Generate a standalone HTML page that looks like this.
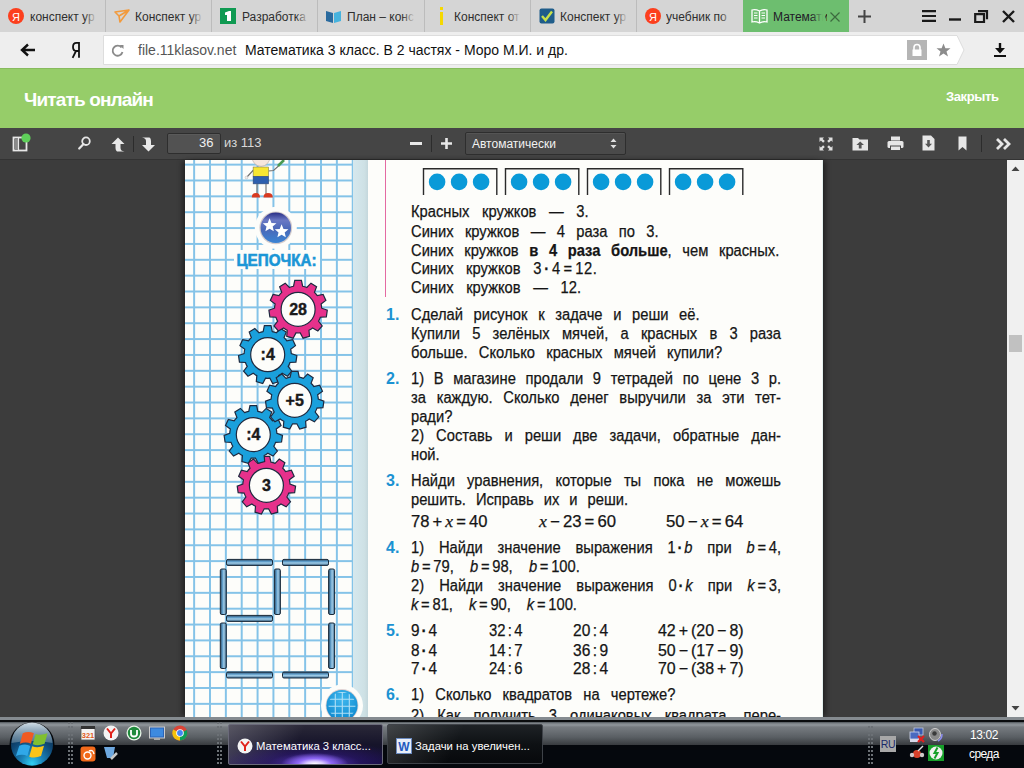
<!DOCTYPE html>
<html><head><meta charset="utf-8">
<style>
*{margin:0;padding:0;box-sizing:border-box}
html,body{width:1024px;height:768px;overflow:hidden;background:#3c3c3c;font-family:"Liberation Sans",sans-serif}
.a{position:absolute}
svg{position:absolute;overflow:visible}
.tabs{left:0;top:0;width:1024px;height:32px;background:#d5d5d5}
.sep{position:absolute;top:0;width:1px;height:32px;background:#bcbcbc}
.tt{position:absolute;top:9px;width:68px;font-size:12px;line-height:16px;color:#2e2e2e;white-space:nowrap;overflow:hidden}
.fade{position:absolute;top:6px;width:14px;height:20px;background:linear-gradient(90deg,rgba(213,213,213,0),#d5d5d5 90%)}
.addr{left:0;top:32px;width:1024px;height:36px;background:#eeeeee}
.green{left:0;top:68px;width:1024px;height:60px;background:#96cd69;border-top:1px solid #88bb5e}
.tool{left:0;top:128px;width:1024px;height:32px;background:#454545;border-bottom:1px solid #333}
.page{left:185px;top:160px;width:638px;height:557px;background:#fdfdfa;box-shadow:-4px 0 5px -1px rgba(0,0,0,0.4),4px 0 5px -1px rgba(0,0,0,0.4)}
.grid{left:185px;top:160px;width:168px;height:557px;
 background-image:linear-gradient(90deg,#84c3e8 1.55px,transparent 1.55px),linear-gradient(180deg,#84c3e8 1.55px,transparent 1.55px);
 background-size:15.87px 15.87px;background-position:8.15px 3.65px}
.band{left:353px;top:160px;width:15px;height:557px;background:linear-gradient(90deg,#d6e8ee,#cee1e5 75%,#c4d7dc)}
.sb{left:1007px;top:160px;width:17px;height:557px;background:#f0f0f0}
.task{left:0;top:717px;width:1024px;height:51px;background:#040608}
.ln{position:absolute;left:226px;font-size:16px;line-height:19px;color:#151515;-webkit-text-stroke:0.25px #151515;transform-origin:0 0;white-space:nowrap;text-align:justify;text-align-last:justify}
.ln b{font-weight:bold}
.num{position:absolute;font-size:16px;line-height:19px;color:#1b92d2;font-weight:bold}
.dot{font-weight:bold;padding:0 2px}
.eq{padding:0 3px}.mi,.pl{padding:0 3px}.co{padding:0 2.5px}
.x{font-family:"Liberation Serif",serif;font-style:italic;font-size:17px}
.v{font-style:italic}
.gt{position:absolute;font-size:14px;font-weight:bold;color:#1a1a1a;text-align:center;width:40px;line-height:16px}
</style></head>
<body>
<!-- TAB BAR -->
<div class="a tabs">
  <div class="sep" style="left:105px"></div>
  <div class="sep" style="left:211px"></div>
  <div class="sep" style="left:317px"></div>
  <div class="sep" style="left:424px"></div>
  <div class="sep" style="left:530px"></div>
  <div class="sep" style="left:636px"></div>
  <!-- tab 0 yandex -->
  <svg style="left:8px;top:8px" width="16" height="16"><circle cx="8" cy="8" r="8" fill="#fc3f1d"/><text x="8" y="12.5" font-size="11" font-family="Liberation Sans" fill="#fff" text-anchor="middle">Я</text></svg>
  <div class="tt" style="left:30px">конспект ур</div><div class="fade" style="left:84px"></div>
  <!-- tab 1 plane -->
  <svg style="left:114px;top:9px" width="16" height="14"><path d="M1 3 L15 1 L6 13 L5 7 Z M5 7 L15 1" fill="none" stroke="#f29a3c" stroke-width="1.6" stroke-linejoin="round"/></svg>
  <div class="tt" style="left:135px">Конспект ур</div><div class="fade" style="left:190px"></div>
  <!-- tab 2 green 1 -->
  <div class="a" style="left:220px;top:8px;width:16px;height:16px;background:#109a52"></div>
  <svg style="left:220px;top:8px" width="16" height="16"><path d="M5 4.5 L9 3 L11 3 L11 13 L7 13 L7 7 L5 7 Z" fill="#fff"/></svg>
  <div class="tt" style="left:242px">Разработка</div><div class="fade" style="left:296px"></div>
  <!-- tab 3 book -->
  <svg style="left:325px;top:9px" width="17" height="15"><path d="M1 2 L8 4 L8 14 L1 12 Z" fill="#2a6a9e"/><path d="M9 4 L16 2 L16 12 L9 14 Z" fill="#46b3de"/></svg>
  <div class="tt" style="left:347px">План – конс</div><div class="fade" style="left:402px"></div>
  <!-- tab 4 yellow i -->
  <svg style="left:438px;top:7px" width="8" height="18"><rect x="2" y="0" width="3" height="3" fill="#f5d800"/><rect x="2" y="5" width="3" height="13" fill="#f5d800"/></svg>
  <div class="tt" style="left:454px">Конспект от</div><div class="fade" style="left:508px"></div>
  <!-- tab 5 check -->
  <svg style="left:539px;top:8px" width="16" height="16"><rect x="0.5" y="0.5" width="15" height="15" rx="2" fill="#1f5d8a"/><path d="M3 8 L6.5 12 L13 3.5" fill="none" stroke="#c8e04a" stroke-width="2.4"/></svg>
  <div class="tt" style="left:560px">Конспект ур</div><div class="fade" style="left:615px"></div>
  <!-- tab 6 yandex -->
  <svg style="left:645px;top:8px" width="16" height="16"><circle cx="8" cy="8" r="8" fill="#fc3f1d"/><text x="8" y="12.5" font-size="11" font-family="Liberation Sans" fill="#fff" text-anchor="middle">Я</text></svg>
  <div class="tt" style="left:666px">учебник по</div><div class="fade" style="left:720px"></div>
  <!-- active tab -->
  <div class="a" style="left:743px;top:0;width:106px;height:32px;background:#6dbe6f"></div>
  <svg style="left:751px;top:8px" width="17" height="16"><path d="M1 2 Q4.5 1 8.5 3 Q12.5 1 16 2 L16 14 Q12.5 13 8.5 15 Q4.5 13 1 14 Z M8.5 3 L8.5 15" fill="none" stroke="#fff" stroke-width="1.3"/><path d="M3 5h3.5M3 7.5h3.5M3 10h3.5M10.5 5h3.5M10.5 7.5h3.5M10.5 10h3.5" stroke="#fff" stroke-width="1"/></svg>
  <div class="tt" style="left:773px;width:54px;color:#221a28">Математика</div>
  <div class="a" style="left:811px;top:6px;width:14px;height:20px;background:linear-gradient(90deg,rgba(109,190,111,0),#6dbe6f 90%)"></div>
  <svg style="left:830px;top:12px" width="10" height="10"><path d="M0.5 0.5 L9.5 9.5 M9.5 0.5 L0.5 9.5" stroke="#3d6a3f" stroke-width="1.2"/></svg>
  <!-- plus -->
  <svg style="left:858px;top:10px" width="13" height="13"><path d="M6.5 0 V13 M0 6.5 H13" stroke="#444" stroke-width="2"/></svg>
  <!-- hamburger -->
  <svg style="left:922px;top:10px" width="14" height="12"><path d="M0 1.2H14M0 6H14M0 10.8H14" stroke="#1a1a1a" stroke-width="2.2"/></svg>
  <svg style="left:949px;top:18px" width="12" height="3"><path d="M0 1.5H12" stroke="#1a1a1a" stroke-width="2.4"/></svg>
  <svg style="left:974px;top:10px" width="14" height="13"><path d="M4 1.2H13V9.2M1.2 4.2H10V12H1.2Z" fill="none" stroke="#1a1a1a" stroke-width="2.2"/></svg>
  <svg style="left:1002px;top:10px" width="13" height="13"><path d="M1 1L12 12M12 1L1 12" stroke="#1a1a1a" stroke-width="2.4"/></svg>
</div>
<!-- ADDRESS -->
<div class="a addr"></div>
<svg style="left:20px;top:43px" width="16" height="14"><path d="M15 7H3 M8 1.5 L2 7 L8 12.5" fill="none" stroke="#111" stroke-width="2.4"/></svg>
<svg style="left:0;top:0" width="100" height="70"><path d="M79 57.8 V42.8 H76.5 Q73 42.8 73 47 Q73 51 76.5 51 H79 M76 51 L72.6 57.8" fill="none" stroke="#111" stroke-width="1.8"/></svg>
<svg style="left:0;top:0" width="1024" height="70"><path d="M103.5 35.5 H957 L964 50 L957 64.5 H103.5 Z" fill="#fff" stroke="#dddddd" stroke-width="1"/></svg>
<svg style="left:111px;top:44px" width="14" height="13"><path d="M10.5 3.5 A5 5 0 1 0 11.5 8" fill="none" stroke="#8a8a8a" stroke-width="1.8"/><path d="M8.5 1 L12.5 1 L12.5 5 Z" fill="#8a8a8a"/></svg>
<div class="a" style="left:138px;top:42px;font-size:14px;line-height:16px;color:#555;white-space:nowrap">file.11klasov.net</div>
<div class="a" style="left:245px;top:42px;font-size:14px;line-height:16px;color:#111;white-space:nowrap">Математика 3 класс. В 2 частях - Моро М.И. и др.</div>
<div class="a" style="left:907px;top:40px;width:20px;height:20px;background:#b5b5b5"></div>
<svg style="left:907px;top:40px" width="20" height="20"><path d="M7 10 V7.5 A3 3 0 0 1 13 7.5 V10" fill="none" stroke="#fff" stroke-width="1.6"/><rect x="5.5" y="9.5" width="9" height="6.5" fill="#fff"/></svg>
<svg style="left:936px;top:43px" width="15" height="14"><path d="M7.5 0.5 L9.4 5.2 L14.5 5.3 L10.5 8.5 L12 13.5 L7.5 10.6 L3 13.5 L4.5 8.5 L0.5 5.3 L5.6 5.2 Z" fill="#8c8c8c"/></svg>
<svg style="left:993px;top:43px" width="14" height="14"><path d="M7 0 V9" stroke="#111" stroke-width="2.4"/><path d="M2 5 L7 10.5 L12 5 Z" fill="#111"/><path d="M1 13H13" stroke="#111" stroke-width="2"/></svg>
<!-- GREEN HEADER -->
<div class="a green"></div>
<div class="a" style="left:24px;top:88.5px;font-size:19px;line-height:22px;font-weight:bold;color:#fff;letter-spacing:-0.85px;white-space:nowrap">Читать онлайн</div>
<div class="a" style="left:946px;top:89px;font-size:13px;line-height:16px;font-weight:bold;color:#fff;letter-spacing:-0.4px;white-space:nowrap">Закрыть</div>
<!-- TOOLBAR -->
<div class="a tool"></div>
<svg style="left:12px;top:136px" width="16" height="16"><rect x="1.5" y="1.5" width="13" height="13" fill="none" stroke="#e8e8e8" stroke-width="1.8"/><rect x="3" y="3" width="3" height="10" fill="#8a8a8a"/><path d="M6.5 2 V14" stroke="#e8e8e8" stroke-width="1.2"/></svg>
<svg style="left:21px;top:133px" width="10" height="10"><circle cx="5" cy="5" r="4.6" fill="#5fd05a"/></svg>
<svg style="left:78px;top:136px" width="13" height="14"><circle cx="8" cy="5.2" r="3.8" fill="none" stroke="#e6e6e6" stroke-width="1.8"/><path d="M5.5 8 L1.2 12.5" stroke="#e6e6e6" stroke-width="2.2" stroke-linecap="round"/></svg>
<svg style="left:111px;top:137px" width="14" height="15"><path d="M7 0.5 L13.5 7 H9.5 V11 Q9.5 14 13.5 14.5 H6 Q4.5 14 4.5 11 V7 H0.5 Z" fill="#e8e8e8"/></svg>
<div class="a" style="left:133px;top:136px;width:1px;height:16px;background:#2c2c2c"></div>
<svg style="left:141px;top:137px" width="15" height="15"><path d="M7.5 14.5 L1 8 H5 V4 Q5 1 1 0.5 H8.5 Q10 1 10 4 V8 H14 Z" fill="#e8e8e8"/></svg>
<div class="a" style="left:167px;top:133px;width:54px;height:21px;background:#525252;border:1px solid #2e2e2e;border-radius:2px;box-shadow:inset 0 1px 0 rgba(255,255,255,0.05)"></div>
<div class="a" style="left:199px;top:135px;font-size:13px;line-height:16px;color:#f0f0f0">36</div>
<div class="a" style="left:224px;top:135px;font-size:13px;line-height:16px;color:#d8d8d8;white-space:nowrap">из 113</div>
<div class="a" style="left:410px;top:142px;width:12px;height:3px;background:#e8e8e8"></div>
<div class="a" style="left:431px;top:135px;width:1px;height:17px;background:#2c2c2c"></div>
<svg style="left:441px;top:138px" width="11" height="11"><path d="M5.5 0V11M0 5.5H11" stroke="#e8e8e8" stroke-width="2.6"/></svg>
<div class="a" style="left:465px;top:132px;width:161px;height:23px;background:#4a4a4a;border:1px solid #2e2e2e;border-radius:2px;box-shadow:inset 0 1px 0 rgba(255,255,255,0.06)"></div>
<div class="a" style="left:472px;top:137px;font-size:12px;line-height:14px;color:#f2f2f2;white-space:nowrap">Автоматически</div>
<svg style="left:610px;top:138px" width="7" height="11"><path d="M3.5 0.5 L6.5 4 H0.5 Z M3.5 10.5 L6.5 7 H0.5 Z" fill="#e0e0e0"/></svg>
<!-- right toolbar icons -->
<svg style="left:819px;top:137px" width="14" height="14"><path d="M0.5 0.5H5L3.6 1.9L5.8 4.1L4.1 5.8L1.9 3.6L0.5 5Z M13.5 0.5H9L10.4 1.9L8.2 4.1L9.9 5.8L12.1 3.6L13.5 5Z M0.5 13.5H5L3.6 12.1L5.8 9.9L4.1 8.2L1.9 10.4L0.5 9Z M13.5 13.5H9L10.4 12.1L8.2 9.9L9.9 8.2L12.1 10.4L13.5 9Z" fill="#e0e0e0"/></svg>
<svg style="left:852px;top:136px" width="17" height="15"><path d="M0.5 2 H6 L7.5 3.5 H16 V14.5 H0.5 Z" fill="#e6e6e6"/><path d="M8.2 5.5 L12 9 H9.6 V12.5 H6.8 V9 H4.4 Z" fill="#555"/></svg>
<svg style="left:887px;top:136px" width="17" height="15"><rect x="4" y="0.5" width="9" height="4" fill="#e6e6e6"/><rect x="0.5" y="5" width="16" height="7" rx="1.5" fill="#e6e6e6"/><rect x="3.5" y="10" width="10" height="4.5" fill="#e6e6e6" stroke="#474747" stroke-width="1"/></svg>
<svg style="left:922px;top:135px" width="13" height="16"><path d="M0.5 0.5 H9 L12.5 4 V15.5 H0.5 Z" fill="#e6e6e6"/><path d="M6.5 12.5 L10 8.8 H7.8 V5 H5.2 V8.8 H3 Z" fill="#555"/></svg>
<svg style="left:958px;top:136px" width="9" height="15"><path d="M0.5 0.5 H8.5 V14.5 L4.5 11 L0.5 14.5 Z" fill="#e6e6e6"/></svg>
<div class="a" style="left:981px;top:135px;width:1px;height:17px;background:#2c2c2c"></div>
<svg style="left:996px;top:138px" width="15" height="12"><path d="M1 1 L6 6 L1 11 M8 1 L13 6 L8 11" fill="none" stroke="#e6e6e6" stroke-width="2.8"/></svg>
<!-- PAGE -->
<div class="a page"></div>
<div class="a grid"></div>
<div class="a band"></div>
<div class="a" style="left:822px;top:160px;width:1px;height:557px;background:#e4f0ee"></div>
<div class="a" style="left:384.7px;top:160px;width:1.6px;height:137px;background:#e46aa2"></div>
<div class="a" style="left:185px;top:160px;width:638px;height:557px;overflow:hidden"><svg style="left:-185px;top:-160px" width="1024" height="717"><defs><linearGradient id="bdg" x1="0" y1="0" x2="0" y2="1"><stop offset="0" stop-color="#2a2f86"/><stop offset="0.25" stop-color="#6a78c4"/><stop offset="0.55" stop-color="#4a68b8"/><stop offset="1" stop-color="#3a84d4"/></linearGradient><linearGradient id="stkh" x1="0" y1="0" x2="0" y2="1"><stop offset="0" stop-color="#2c4a66"/><stop offset="0.35" stop-color="#5e9cc8"/><stop offset="0.6" stop-color="#9fcbe6"/><stop offset="1" stop-color="#3e6a8e"/></linearGradient><linearGradient id="stkv" x1="0" y1="0" x2="1" y2="0"><stop offset="0" stop-color="#2c4a66"/><stop offset="0.35" stop-color="#5e9cc8"/><stop offset="0.6" stop-color="#9fcbe6"/><stop offset="1" stop-color="#3e6a8e"/></linearGradient><radialGradient id="glb" cx="0.5" cy="0.3" r="0.75"><stop offset="0" stop-color="#40b8ee"/><stop offset="0.8" stop-color="#1590d4"/><stop offset="1" stop-color="#0a6ab0"/></radialGradient><clipPath id="gclip"><circle cx="342" cy="705.5" r="13.5"/></clipPath></defs><path d="M423.5 195 V168.7 H496.8 V195" fill="none" stroke="#2a2a2a" stroke-width="1.4"/><circle cx="437.1" cy="181.9" r="8.3" fill="#0a9ad8"/><circle cx="459.1" cy="181.9" r="8.3" fill="#0a9ad8"/><circle cx="481.1" cy="181.9" r="8.3" fill="#0a9ad8"/><path d="M505.5 195 V168.7 H578.8 V195" fill="none" stroke="#2a2a2a" stroke-width="1.4"/><circle cx="519.1" cy="181.9" r="8.3" fill="#0a9ad8"/><circle cx="541.1" cy="181.9" r="8.3" fill="#0a9ad8"/><circle cx="563.1" cy="181.9" r="8.3" fill="#0a9ad8"/><path d="M587.5 195 V168.7 H660.8 V195" fill="none" stroke="#2a2a2a" stroke-width="1.4"/><circle cx="601.1" cy="181.9" r="8.3" fill="#0a9ad8"/><circle cx="623.1" cy="181.9" r="8.3" fill="#0a9ad8"/><circle cx="645.1" cy="181.9" r="8.3" fill="#0a9ad8"/><path d="M669.5 195 V168.7 H742.8 V195" fill="none" stroke="#2a2a2a" stroke-width="1.4"/><circle cx="683.1" cy="181.9" r="8.3" fill="#0a9ad8"/><circle cx="705.1" cy="181.9" r="8.3" fill="#0a9ad8"/><circle cx="727.1" cy="181.9" r="8.3" fill="#0a9ad8"/><circle cx="261" cy="157.5" r="8.8" fill="#f6e6dc" stroke="#b8a8a0" stroke-width="0.6"/><path d="M253.5 170 L246.5 177.5 M268.5 171 L273.5 170.5 L278.5 166" stroke="#707070" stroke-width="1.1" fill="none"/><circle cx="246.5" cy="177.5" r="1.4" fill="#eee" stroke="#aaa" stroke-width="0.4"/><path d="M278 166 L284 160" stroke="#4a9a52" stroke-width="2.6"/><rect x="253.1" y="167" width="15.6" height="9.3" fill="#f8e632" stroke="#6a6a50" stroke-width="0.5"/><rect x="253.1" y="176.3" width="15.6" height="7.6" fill="#2d5fae" stroke="#3a4a6a" stroke-width="0.5"/><path d="M257 184 V194 M266 184 V194" stroke="#7a7a7a" stroke-width="1.2"/><path d="M251.8 197.4 Q251.8 193 256 193 Q260 193 260 197.4 Z M263.5 197.4 Q263.5 193 268 193 Q272.8 193 272.8 197.4 Z" fill="#d83a20"/><circle cx="275.8" cy="227.8" r="21" fill="#fdfdfa"/><circle cx="275.8" cy="227.8" r="16.4" fill="#d4cccc"/><circle cx="275.8" cy="227.8" r="15.2" fill="url(#bdg)"/><path d="M269.60,218.30 L271.50,222.88 L276.45,223.28 L272.68,226.50 L273.83,231.32 L269.60,228.74 L265.37,231.32 L266.52,226.50 L262.75,223.28 L267.70,222.88 Z" fill="#fff"/><path d="M281.60,224.30 L283.50,228.88 L288.45,229.28 L284.68,232.50 L285.83,237.32 L281.60,234.74 L277.37,237.32 L278.52,232.50 L274.75,229.28 L279.70,228.88 Z" fill="#fff"/><rect x="234" y="250" width="86" height="19" fill="#fdfdfa"/><text x="236.5" y="265.7" font-family="Liberation Sans" font-weight="bold" font-size="16" fill="#1b96d6" stroke="#1b96d6" stroke-width="0.6" textLength="80" lengthAdjust="spacingAndGlyphs">ЦЕПОЧКА:</text><path d="M263.15 331.54 L264.37 325.69 L271.03 325.69 L272.25 331.54 A23.6 23.6 0 0 1 276.39 332.76 L280.58 328.50 L286.18 332.10 L284.05 337.68 A23.6 23.6 0 0 1 286.87 340.94 L292.71 339.62 L295.47 345.68 L290.66 349.22 A23.6 23.6 0 0 1 291.27 353.49 L296.89 355.53 L295.94 362.12 L289.97 362.50 A23.6 23.6 0 0 1 288.18 366.42 L291.80 371.18 L287.44 376.21 L282.22 373.31 A23.6 23.6 0 0 1 278.59 375.64 L279.07 381.60 L272.68 383.47 L269.85 378.20 A23.6 23.6 0 0 1 265.55 378.20 L262.72 383.47 L256.33 381.60 L256.81 375.64 A23.6 23.6 0 0 1 253.18 373.31 L247.96 376.21 L243.60 371.18 L247.22 366.42 A23.6 23.6 0 0 1 245.43 362.50 L239.46 362.12 L238.51 355.53 L244.13 353.49 A23.6 23.6 0 0 1 244.74 349.22 L239.93 345.68 L242.69 339.62 L248.53 340.94 A23.6 23.6 0 0 1 251.35 337.68 L249.22 332.10 L254.82 328.50 L259.01 332.76 A23.6 23.6 0 0 1 263.15 331.54 Z" fill="#1aa0dc" stroke="#1e2a40" stroke-width="1.2"/><circle cx="267.7" cy="354.7" r="17" fill="#fdfdfa" stroke="#1e2a40" stroke-width="1.2"/><text x="267.7" y="359.9" font-family="Liberation Sans" font-weight="bold" font-size="16" fill="#1a1a1a" stroke="#1a1a1a" stroke-width="0.4" text-anchor="middle">:4</text><path d="M261.85 462.14 L263.07 456.29 L269.73 456.29 L270.95 462.14 A23.6 23.6 0 0 1 275.09 463.36 L279.28 459.10 L284.88 462.70 L282.75 468.28 A23.6 23.6 0 0 1 285.57 471.54 L291.41 470.22 L294.17 476.28 L289.36 479.82 A23.6 23.6 0 0 1 289.97 484.09 L295.59 486.13 L294.64 492.72 L288.67 493.10 A23.6 23.6 0 0 1 286.88 497.02 L290.50 501.78 L286.14 506.81 L280.92 503.91 A23.6 23.6 0 0 1 277.29 506.24 L277.77 512.20 L271.38 514.07 L268.55 508.80 A23.6 23.6 0 0 1 264.25 508.80 L261.42 514.07 L255.03 512.20 L255.51 506.24 A23.6 23.6 0 0 1 251.88 503.91 L246.66 506.81 L242.30 501.78 L245.92 497.02 A23.6 23.6 0 0 1 244.13 493.10 L238.16 492.72 L237.21 486.13 L242.83 484.09 A23.6 23.6 0 0 1 243.44 479.82 L238.63 476.28 L241.39 470.22 L247.23 471.54 A23.6 23.6 0 0 1 250.05 468.28 L247.92 462.70 L253.52 459.10 L257.71 463.36 A23.6 23.6 0 0 1 261.85 462.14 Z" fill="#e6318b" stroke="#1e2a40" stroke-width="1.2"/><circle cx="266.4" cy="485.3" r="17" fill="#fdfdfa" stroke="#1e2a40" stroke-width="1.2"/><text x="266.4" y="490.5" font-family="Liberation Sans" font-weight="bold" font-size="16" fill="#1a1a1a" stroke="#1a1a1a" stroke-width="0.4" text-anchor="middle">3</text><path d="M248.75 411.44 L249.97 405.59 L256.63 405.59 L257.85 411.44 A23.6 23.6 0 0 1 261.99 412.66 L266.18 408.40 L271.78 412.00 L269.65 417.58 A23.6 23.6 0 0 1 272.47 420.84 L278.31 419.52 L281.07 425.58 L276.26 429.12 A23.6 23.6 0 0 1 276.87 433.39 L282.49 435.43 L281.54 442.02 L275.57 442.40 A23.6 23.6 0 0 1 273.78 446.32 L277.40 451.08 L273.04 456.11 L267.82 453.21 A23.6 23.6 0 0 1 264.19 455.54 L264.67 461.50 L258.28 463.37 L255.45 458.10 A23.6 23.6 0 0 1 251.15 458.10 L248.32 463.37 L241.93 461.50 L242.41 455.54 A23.6 23.6 0 0 1 238.78 453.21 L233.56 456.11 L229.20 451.08 L232.82 446.32 A23.6 23.6 0 0 1 231.03 442.40 L225.06 442.02 L224.11 435.43 L229.73 433.39 A23.6 23.6 0 0 1 230.34 429.12 L225.53 425.58 L228.29 419.52 L234.13 420.84 A23.6 23.6 0 0 1 236.95 417.58 L234.82 412.00 L240.42 408.40 L244.61 412.66 A23.6 23.6 0 0 1 248.75 411.44 Z" fill="#1aa0dc" stroke="#1e2a40" stroke-width="1.2"/><circle cx="253.3" cy="434.6" r="17" fill="#fdfdfa" stroke="#1e2a40" stroke-width="1.2"/><text x="253.3" y="439.8" font-family="Liberation Sans" font-weight="bold" font-size="16" fill="#1a1a1a" stroke="#1a1a1a" stroke-width="0.4" text-anchor="middle">:4</text><path d="M290.15 377.14 L291.37 371.29 L298.03 371.29 L299.25 377.14 A23.6 23.6 0 0 1 303.39 378.36 L307.58 374.10 L313.18 377.70 L311.05 383.28 A23.6 23.6 0 0 1 313.87 386.54 L319.71 385.22 L322.47 391.28 L317.66 394.82 A23.6 23.6 0 0 1 318.27 399.09 L323.89 401.13 L322.94 407.72 L316.97 408.10 A23.6 23.6 0 0 1 315.18 412.02 L318.80 416.78 L314.44 421.81 L309.22 418.91 A23.6 23.6 0 0 1 305.59 421.24 L306.07 427.20 L299.68 429.07 L296.85 423.80 A23.6 23.6 0 0 1 292.55 423.80 L289.72 429.07 L283.33 427.20 L283.81 421.24 A23.6 23.6 0 0 1 280.18 418.91 L274.96 421.81 L270.60 416.78 L274.22 412.02 A23.6 23.6 0 0 1 272.43 408.10 L266.46 407.72 L265.51 401.13 L271.13 399.09 A23.6 23.6 0 0 1 271.74 394.82 L266.93 391.28 L269.69 385.22 L275.53 386.54 A23.6 23.6 0 0 1 278.35 383.28 L276.22 377.70 L281.82 374.10 L286.01 378.36 A23.6 23.6 0 0 1 290.15 377.14 Z" fill="#1aa0dc" stroke="#1e2a40" stroke-width="1.2"/><circle cx="294.7" cy="400.3" r="17" fill="#fdfdfa" stroke="#1e2a40" stroke-width="1.2"/><text x="294.7" y="405.5" font-family="Liberation Sans" font-weight="bold" font-size="16" fill="#1a1a1a" stroke="#1a1a1a" stroke-width="0.4" text-anchor="middle">+5</text><path d="M293.55 286.24 L294.77 280.39 L301.43 280.39 L302.65 286.24 A23.6 23.6 0 0 1 306.79 287.46 L310.98 283.20 L316.58 286.80 L314.45 292.38 A23.6 23.6 0 0 1 317.27 295.64 L323.11 294.32 L325.87 300.38 L321.06 303.92 A23.6 23.6 0 0 1 321.67 308.19 L327.29 310.23 L326.34 316.82 L320.37 317.20 A23.6 23.6 0 0 1 318.58 321.12 L322.20 325.88 L317.84 330.91 L312.62 328.01 A23.6 23.6 0 0 1 308.99 330.34 L309.47 336.30 L303.08 338.17 L300.25 332.90 A23.6 23.6 0 0 1 295.95 332.90 L293.12 338.17 L286.73 336.30 L287.21 330.34 A23.6 23.6 0 0 1 283.58 328.01 L278.36 330.91 L274.00 325.88 L277.62 321.12 A23.6 23.6 0 0 1 275.83 317.20 L269.86 316.82 L268.91 310.23 L274.53 308.19 A23.6 23.6 0 0 1 275.14 303.92 L270.33 300.38 L273.09 294.32 L278.93 295.64 A23.6 23.6 0 0 1 281.75 292.38 L279.62 286.80 L285.22 283.20 L289.41 287.46 A23.6 23.6 0 0 1 293.55 286.24 Z" fill="#e6318b" stroke="#1e2a40" stroke-width="1.2"/><circle cx="298.1" cy="309.4" r="17" fill="#fdfdfa" stroke="#1e2a40" stroke-width="1.2"/><text x="298.1" y="314.59999999999997" font-family="Liberation Sans" font-weight="bold" font-size="16" fill="#1a1a1a" stroke="#1a1a1a" stroke-width="0.4" text-anchor="middle">28</text><rect x="226.5" y="559.4" width="46" height="6" rx="1.5" fill="url(#stkh)" stroke="#1a2a3a" stroke-width="1"/><rect x="282.5" y="559.4" width="46" height="6" rx="1.5" fill="url(#stkh)" stroke="#1a2a3a" stroke-width="1"/><rect x="226.5" y="615.4" width="46" height="6" rx="1.5" fill="url(#stkh)" stroke="#1a2a3a" stroke-width="1"/><rect x="226.5" y="672" width="46" height="6" rx="1.5" fill="url(#stkh)" stroke="#1a2a3a" stroke-width="1"/><rect x="282.5" y="672" width="46" height="6" rx="1.5" fill="url(#stkh)" stroke="#1a2a3a" stroke-width="1"/><rect x="220.3" y="569" width="6" height="45.5" rx="1.5" fill="url(#stkv)" stroke="#1a2a3a" stroke-width="1"/><rect x="274.4" y="569" width="6" height="45.5" rx="1.5" fill="url(#stkv)" stroke="#1a2a3a" stroke-width="1"/><rect x="328.6" y="569" width="6" height="45.5" rx="1.5" fill="url(#stkv)" stroke="#1a2a3a" stroke-width="1"/><rect x="220.3" y="623" width="6" height="45.5" rx="1.5" fill="url(#stkv)" stroke="#1a2a3a" stroke-width="1"/><rect x="328.6" y="623" width="6" height="45.5" rx="1.5" fill="url(#stkv)" stroke="#1a2a3a" stroke-width="1"/><circle cx="342" cy="705.5" r="21" fill="#fdfdfa"/><circle cx="342" cy="705.5" r="16.4" fill="#e0d4d4"/><circle cx="342" cy="705.5" r="15.6" fill="url(#glb)"/><g clip-path="url(#gclip)" stroke="#b0e0f6" stroke-width="1.1"><path d="M335.3 688 V724"/><path d="M342.3 688 V724"/><path d="M349.3 688 V724"/><path d="M324 692.5 H360"/><path d="M324 699.3 H360"/><path d="M324 706.3 H360"/><path d="M324 713.3 H360"/></g></svg></div>
<div class="ln" style="left:411px;top:202.3px;width:193.0px;transform:scaleX(0.92);">Красных кружков — 3.</div>
<div class="ln" style="left:411px;top:221.7px;width:269.1px;transform:scaleX(0.92);">Синих кружков — 4 раза по 3.</div>
<div class="ln" style="left:411px;top:240.5px;width:400.3px;transform:scaleX(0.92);">Синих кружков <b>в 4 раза больше</b>, чем красных.</div>
<div class="ln" style="left:411px;top:259.2px;width:202.7px;transform:scaleX(0.92);">Синих кружков <span style="letter-spacing:0.6px">3<span class="dot" style="padding:0 2.5px">·</span>4<span class="eq" style="padding:0 3px">=</span>12.</span></div>
<div class="ln" style="left:411px;top:278.4px;width:184.8px;transform:scaleX(0.92);">Синих кружков — 12.</div>
<div class="num" style="left:386px;top:304.5px">1.</div>
<div class="ln" style="left:411px;top:304.5px;width:313.7px;transform:scaleX(0.92);">Сделай рисунок к задаче и реши её.</div>
<div class="ln" style="left:411px;top:323.7px;width:402.2px;transform:scaleX(0.92);">Купили 5 зелёных мячей, а красных в 3 раза</div>
<div class="ln" style="left:411px;top:343.0px;width:338.3px;transform:scaleX(0.92);">больше. Сколько красных мячей купили?</div>
<div class="num" style="left:386px;top:368.7px">2.</div>
<div class="ln" style="left:411px;top:368.7px;width:402.2px;transform:scaleX(0.92);">1) В магазине продали 9 тетрадей по цене 3 р.</div>
<div class="ln" style="left:411px;top:388.0px;width:402.2px;transform:scaleX(0.92);">за каждую. Сколько денег выручили за эти тет-</div>
<div class="ln" style="left:411px;top:406.7px;text-align:left;text-align-last:left;transform:scaleX(0.92);">ради?</div>
<div class="ln" style="left:411px;top:426.2px;width:402.2px;transform:scaleX(0.92);">2) Составь и реши две задачи, обратные дан-</div>
<div class="ln" style="left:411px;top:444.8px;text-align:left;text-align-last:left;transform:scaleX(0.92);">ной.</div>
<div class="num" style="left:386px;top:471.0px">3.</div>
<div class="ln" style="left:411px;top:471.0px;width:402.2px;transform:scaleX(0.92);">Найди уравнения, которые ты пока не можешь</div>
<div class="ln" style="left:411px;top:490.4px;width:235.9px;transform:scaleX(0.92);">решить. Исправь их и реши.</div>
<div class="ln fx" style="left:411px;top:512.3px;text-align:left;text-align-last:left;transform:scaleX(1.0348)">78<span class="pl">+</span><i class="x">x</i><span class="eq">=</span>40</div>
<div class="ln fx" style="left:538.6px;top:512.3px;text-align:left;text-align-last:left;transform:scaleX(1.0443)"><i class="x">x</i><span class="mi">−</span>23<span class="eq">=</span>60</div>
<div class="ln fx" style="left:666.3px;top:512.3px;text-align:left;text-align-last:left;transform:scaleX(1.0484)">50<span class="mi">−</span><i class="x">x</i><span class="eq">=</span>64</div>
<div class="num" style="left:386px;top:537.6px">4.</div>
<div class="ln" style="left:411px;top:537.6px;width:402.2px;transform:scaleX(0.92);">1) Найди значение выражения 1<span class="dot">·</span><i class="v">b</i> при <i class="v">b</i><span class="eq">=</span>4,</div>
<div class="ln" style="left:411px;top:557.0px;width:183.5px;transform:scaleX(0.92);"><i class="v">b</i><span class="eq">=</span>79, <i class="v">b</i><span class="eq">=</span>98, <i class="v">b</i><span class="eq">=</span>100.</div>
<div class="ln" style="left:411px;top:576.3px;width:402.2px;transform:scaleX(0.92);">2) Найди значение выражения 0<span class="dot">·</span><i class="v">k</i> при <i class="v">k</i><span class="eq">=</span>3,</div>
<div class="ln" style="left:411px;top:595.0px;width:180.4px;transform:scaleX(0.92);"><i class="v">k</i><span class="eq">=</span>81, <i class="v">k</i><span class="eq">=</span>90, <i class="v">k</i><span class="eq">=</span>100.</div>
<div class="num" style="left:386px;top:621.2px">5.</div>
<div class="ln fx" style="left:411px;top:621.2px;text-align:left;text-align-last:left;transform:scaleX(0.9580)">9<span class="dot">·</span>4</div>
<div class="ln fx" style="left:488.5px;top:621.2px;text-align:left;text-align-last:left;transform:scaleX(0.9265)">32<span class="co">:</span>4</div>
<div class="ln fx" style="left:572.9px;top:621.2px;text-align:left;text-align-last:left;transform:scaleX(0.9708)">20<span class="co">:</span>4</div>
<div class="ln fx" style="left:658.4px;top:621.2px;text-align:left;text-align-last:left;transform:scaleX(0.9972)">42<span class="pl">+</span>(20<span class="mi">−</span>8)</div>
<div class="ln fx" style="left:411px;top:640.5px;text-align:left;text-align-last:left;transform:scaleX(0.9580)">8<span class="dot">·</span>4</div>
<div class="ln fx" style="left:488.5px;top:640.5px;text-align:left;text-align-last:left;transform:scaleX(0.9265)">14<span class="co">:</span>7</div>
<div class="ln fx" style="left:572.9px;top:640.5px;text-align:left;text-align-last:left;transform:scaleX(0.9708)">36<span class="co">:</span>9</div>
<div class="ln fx" style="left:658.4px;top:640.5px;text-align:left;text-align-last:left;transform:scaleX(0.9972)">50<span class="mi">−</span>(17<span class="mi">−</span>9)</div>
<div class="ln fx" style="left:411px;top:659.4px;text-align:left;text-align-last:left;transform:scaleX(0.9580)">7<span class="dot">·</span>4</div>
<div class="ln fx" style="left:488.5px;top:659.4px;text-align:left;text-align-last:left;transform:scaleX(0.9265)">24<span class="co">:</span>6</div>
<div class="ln fx" style="left:572.9px;top:659.4px;text-align:left;text-align-last:left;transform:scaleX(0.9708)">28<span class="co">:</span>4</div>
<div class="ln fx" style="left:658.4px;top:659.4px;text-align:left;text-align-last:left;transform:scaleX(0.9972)">70<span class="mi">−</span>(38<span class="pl">+</span>7)</div>
<div class="num" style="left:386px;top:685.2px">6.</div>
<div class="ln" style="left:411px;top:685.2px;width:287.3px;transform:scaleX(0.92);">1) Сколько квадратов на чертеже?</div>
<div class="ln" style="left:411px;top:705.6px;width:402.2px;transform:scaleX(0.92);">2) Как получить 3 одинаковых квадрата, пере-</div>

<!-- SCROLLBAR -->
<div class="a sb"></div>
<svg style="left:1011px;top:166px" width="9" height="6"><path d="M4.5 0.5 L8.5 5 H0.5 Z" fill="#444"/></svg>
<div class="a" style="left:1009px;top:335px;width:13px;height:17px;background:#c1c1c1"></div>
<svg style="left:1011px;top:705px" width="9" height="6"><path d="M4.5 5.5 L8.5 1 H0.5 Z" fill="#444"/></svg>
<!-- TASKBAR -->
<div class="a task"></div>
<div class="a" style="left:0;top:717px;width:1024px;height:3px;background:#858b90"></div>
<div class="a" style="left:0;top:720px;width:1024px;height:1.5px;background:#0a0c0e"></div>
<div class="a" style="left:0;top:721.5px;width:1024px;height:23.5px;background:linear-gradient(180deg,#50565b 0px,#8a9095 2px,#8a9095 3.5px,#777c81 5px,#5a5f64 15px,#36393d 23.5px)"></div>
<div class="a" style="left:0;top:745px;width:1024px;height:23px;background:#05080d"></div>
<!-- start orb -->
<svg style="left:0;top:717px" width="70" height="51">
 <defs>
  <radialGradient id="orb" cx="0.5" cy="0.95" r="0.75"><stop offset="0" stop-color="#30d0f4"/><stop offset="0.35" stop-color="#1a82b8"/><stop offset="0.75" stop-color="#0f4a78"/><stop offset="1" stop-color="#0c3558"/></radialGradient>
  <linearGradient id="orbg" x1="0" y1="0" x2="0" y2="1"><stop offset="0" stop-color="#dce8f0" stop-opacity="0.95"/><stop offset="1" stop-color="#7a98ac" stop-opacity="0.55"/></linearGradient>
 </defs>
 <circle cx="32" cy="27.7" r="22.5" fill="#05080c"/>
 <circle cx="32" cy="27.7" r="21" fill="url(#orb)"/>
 <path d="M11.5 26 A20.5 20.5 0 0 1 52.5 26 Q32 22 11.5 26 Z" fill="url(#orbg)"/>
 <g transform="translate(32 28) skewX(-9) scale(1.3) translate(-30.5 -26)">
 <path d="M22 17 Q26 15 30.5 17 L29.5 25 Q25.5 23 21 25 Z" fill="#f05a22"/>
 <path d="M32 17.5 Q36.5 19 41 17 L40 25 Q35.5 27 31 25.5 Z" fill="#80c030"/>
 <path d="M20.8 26.5 Q25.5 24.5 29.3 26.8 L28.3 34.5 Q24 32.5 19.5 34.5 Z" fill="#30a8e8"/>
 <path d="M30.8 27 Q35.5 28.5 39.8 26.5 L38.8 34.5 Q34.5 36.5 29.8 35 Z" fill="#fcc418"/>
 </g>
</svg>
<!-- dots -->
<svg style="left:67px;top:721px" width="8" height="46"><g fill="#6c7176">
 <rect x="1" y="1" width="2" height="2"/><rect x="4" y="1" width="2" height="2"/>
 <rect x="1" y="5" width="2" height="2"/><rect x="4" y="5" width="2" height="2"/>
 <rect x="1" y="9" width="2" height="2"/><rect x="4" y="9" width="2" height="2"/>
 <rect x="1" y="13" width="2" height="2"/><rect x="4" y="13" width="2" height="2"/>
 <rect x="1" y="17" width="2" height="2"/><rect x="4" y="17" width="2" height="2"/>
 <rect x="1" y="21" width="2" height="2"/><rect x="4" y="21" width="2" height="2"/>
 <rect x="1" y="25" width="2" height="2"/><rect x="4" y="25" width="2" height="2"/>
 <rect x="1" y="29" width="2" height="2"/><rect x="4" y="29" width="2" height="2"/>
 <rect x="1" y="33" width="2" height="2"/><rect x="4" y="33" width="2" height="2"/>
 <rect x="1" y="37" width="2" height="2"/><rect x="4" y="37" width="2" height="2"/>
 <rect x="1" y="41" width="2" height="2"/><rect x="4" y="41" width="2" height="2"/>
</g></svg>
<!-- quicklaunch icons -->
<svg style="left:80px;top:725px" width="16" height="16"><rect x="1" y="3" width="14" height="12" fill="#f4f4f4" stroke="#555" stroke-width="0.8"/><rect x="1" y="1" width="14" height="3" fill="#333"/><text x="8" y="13" font-size="7.5" font-family="Liberation Sans" font-weight="bold" text-anchor="middle" fill="#e05a20">321</text></svg>
<svg style="left:103px;top:725px" width="16" height="16"><circle cx="8" cy="8" r="7.5" fill="#f4f4f4"/><path d="M4 3.5 L8 8.5 L12 3.5 M8 8.5 V13" fill="none" stroke="#e0221a" stroke-width="2"/></svg>
<svg style="left:126px;top:725px" width="16" height="16"><circle cx="8" cy="8" r="7.5" fill="#eaf4ea"/><circle cx="8" cy="8" r="6.2" fill="#1f8a3c"/><path d="M5 5 V9 Q5 11.5 8 11.5 Q11 11.5 11 9 V5" fill="none" stroke="#fff" stroke-width="1.8"/></svg>
<svg style="left:149px;top:725px" width="16" height="16"><rect x="0.5" y="2" width="15" height="11" fill="#2a64b8" stroke="#ccc" stroke-width="1"/><rect x="2" y="3.5" width="12" height="8" fill="#3d8ae0"/><rect x="5" y="13" width="6" height="2" fill="#aaa"/></svg>
<svg style="left:172px;top:725px" width="16" height="16"><circle cx="8" cy="8" r="7.5" fill="#db4437"/><path d="M8 8 L14.8 5 A7.5 7.5 0 0 1 8 15.5 Z" fill="#0f9d58"/><path d="M8 8 L8 15.5 A7.5 7.5 0 0 1 1.2 4.5 Z" fill="#f4c20d"/><circle cx="8" cy="8" r="3.8" fill="#fff"/><circle cx="8" cy="8" r="2.9" fill="#4285f4"/></svg>
<svg style="left:80px;top:746px" width="16" height="16"><rect x="0.5" y="0.5" width="15" height="15" rx="3" fill="#f26a1b"/><circle cx="7.5" cy="9.5" r="3.5" fill="none" stroke="#fff" stroke-width="1.4"/><path d="M9 5 Q13 3 14 8" fill="none" stroke="#fff" stroke-width="1.4"/></svg>
<svg style="left:103px;top:746px" width="16" height="16"><path d="M1 1 H12 L10 12 H4 Z" fill="#6ea8e0"/><path d="M8 13 L14 7" stroke="#c8c8c8" stroke-width="2.5"/></svg>
<!-- dots 2 -->
<svg style="left:216px;top:721px" width="8" height="46"><g fill="#6c7176">
 <rect x="1" y="1" width="2" height="2"/><rect x="4" y="1" width="2" height="2"/>
 <rect x="1" y="5" width="2" height="2"/><rect x="4" y="5" width="2" height="2"/>
 <rect x="1" y="9" width="2" height="2"/><rect x="4" y="9" width="2" height="2"/>
 <rect x="1" y="13" width="2" height="2"/><rect x="4" y="13" width="2" height="2"/>
 <rect x="1" y="17" width="2" height="2"/><rect x="4" y="17" width="2" height="2"/>
 <rect x="1" y="21" width="2" height="2"/><rect x="4" y="21" width="2" height="2"/>
 <rect x="1" y="25" width="2" height="2"/><rect x="4" y="25" width="2" height="2"/>
 <rect x="1" y="29" width="2" height="2"/><rect x="4" y="29" width="2" height="2"/>
 <rect x="1" y="33" width="2" height="2"/><rect x="4" y="33" width="2" height="2"/>
 <rect x="1" y="37" width="2" height="2"/><rect x="4" y="37" width="2" height="2"/>
 <rect x="1" y="41" width="2" height="2"/><rect x="4" y="41" width="2" height="2"/>
</g></svg>
<!-- active button -->
<div class="a" style="left:228px;top:724px;width:155px;height:41px;border:1px solid #6a6a7a;border-radius:2px;background:radial-gradient(ellipse 22% 28% at 56% 100%,#ffffff 0%,#d8c8ff 25%,rgba(150,110,255,0.9) 50%,rgba(90,50,200,0) 100%),radial-gradient(ellipse 60% 60% at 56% 100%,rgba(110,70,230,0.85) 0%,rgba(60,30,150,0.4) 50%,rgba(20,10,60,0) 100%),linear-gradient(115deg,rgba(255,255,255,0.22) 0%,rgba(255,255,255,0.08) 30%,rgba(255,255,255,0) 45%),linear-gradient(180deg,#2a2838 0%,#16142a 50%,#120c34 100%)"></div>
<svg style="left:237px;top:738px" width="16" height="16"><circle cx="8" cy="8" r="7.5" fill="#f4f4f4"/><path d="M4 3.5 L8 8.5 L12 3.5 M8 8.5 V13" fill="none" stroke="#e0221a" stroke-width="2"/></svg>
<div class="a" style="left:256px;top:739px;font-size:11.3px;line-height:14px;color:#fff;white-space:nowrap">Математика 3 класс...</div>
<!-- second button -->
<div class="a" style="left:387px;top:724px;width:156px;height:40px;border:1px solid #3e4248;border-radius:2px;background:linear-gradient(115deg,rgba(255,255,255,0.16) 0%,rgba(255,255,255,0.05) 30%,rgba(255,255,255,0) 45%),linear-gradient(180deg,#1e2226 0%,#0e1114 50%,#07090c 100%)"></div>
<svg style="left:396px;top:738px" width="16" height="16"><rect x="0.5" y="0.5" width="15" height="15" fill="#e8eef8" stroke="#6a8ac0" stroke-width="1"/><text x="8" y="13" font-size="12" font-weight="bold" font-family="Liberation Sans" text-anchor="middle" fill="#1f5bbf">W</text></svg>
<div class="a" style="left:415px;top:739px;font-size:11.3px;line-height:14px;color:#fff;white-space:nowrap">Задачи на увеличен...</div>
<!-- tray -->
<svg style="left:867px;top:721px" width="8" height="46"><g fill="#6c7176">
 <rect x="1" y="5" width="2" height="2"/><rect x="4" y="5" width="2" height="2"/>
 <rect x="1" y="9" width="2" height="2"/><rect x="4" y="9" width="2" height="2"/>
 <rect x="1" y="13" width="2" height="2"/><rect x="4" y="13" width="2" height="2"/>
 <rect x="1" y="17" width="2" height="2"/><rect x="4" y="17" width="2" height="2"/>
 <rect x="1" y="21" width="2" height="2"/><rect x="4" y="21" width="2" height="2"/>
 <rect x="1" y="25" width="2" height="2"/><rect x="4" y="25" width="2" height="2"/>
 <rect x="1" y="29" width="2" height="2"/><rect x="4" y="29" width="2" height="2"/>
 <rect x="1" y="33" width="2" height="2"/><rect x="4" y="33" width="2" height="2"/>
 <rect x="1" y="37" width="2" height="2"/><rect x="4" y="37" width="2" height="2"/>
 <rect x="1" y="41" width="2" height="2"/><rect x="4" y="41" width="2" height="2"/>
</g></svg>
<div class="a" style="left:880px;top:736px;width:16px;height:16px;background:#a8a8a8"></div>
<div class="a" style="left:880px;top:738px;width:16px;font-size:10.5px;line-height:12px;color:#1a2a6a;text-align:center;letter-spacing:-0.3px">RU</div>
<svg style="left:909px;top:727px" width="17" height="17"><rect x="5" y="1" width="9" height="7" fill="#3a5ab0" stroke="#c0c8e0" stroke-width="0.8"/><rect x="1" y="5" width="9" height="7" fill="#4a6ac0" stroke="#d0d8f0" stroke-width="0.8"/><rect x="1" y="12" width="9" height="3" fill="#d8d8e8"/><path d="M9 9 L15 15 M15 9 L9 15" stroke="#e02020" stroke-width="2.2"/></svg>
<svg style="left:928px;top:727px" width="17" height="17"><ellipse cx="7" cy="7.5" rx="5.5" ry="6" fill="#8a8a8a" stroke="#d0d0d0" stroke-width="1"/><circle cx="6.5" cy="6.5" r="2.2" fill="#3a3a3a"/><path d="M10 14 Q14 12 14 7" fill="none" stroke="#8c8cf0" stroke-width="1.5"/></svg>
<svg style="left:909px;top:745px" width="17" height="17"><circle cx="8" cy="9" r="4" fill="#d8402a"/><circle cx="3" cy="10" r="2.2" fill="#d0c8c8"/><circle cx="13" cy="10" r="2.2" fill="#d0c8c8"/><path d="M9 6 L14 1" stroke="#e0e0e0" stroke-width="1.5"/></svg>
<svg style="left:928px;top:745px" width="16" height="16"><rect x="0" y="0" width="16" height="16" fill="#17a02a"/><circle cx="8" cy="8" r="6.5" fill="#f0f0f0"/><path d="M9.5 2.5 L6.5 8 H9.5 L6.5 13.5" fill="none" stroke="#17a02a" stroke-width="2"/></svg>
<div class="a" style="left:970px;top:728px;font-size:12px;line-height:14px;color:#fff;white-space:nowrap;letter-spacing:-0.4px">13:02</div>
<div class="a" style="left:969px;top:747px;font-size:12px;line-height:14px;color:#fff;white-space:nowrap;letter-spacing:-0.6px">среда</div>

</body></html>
